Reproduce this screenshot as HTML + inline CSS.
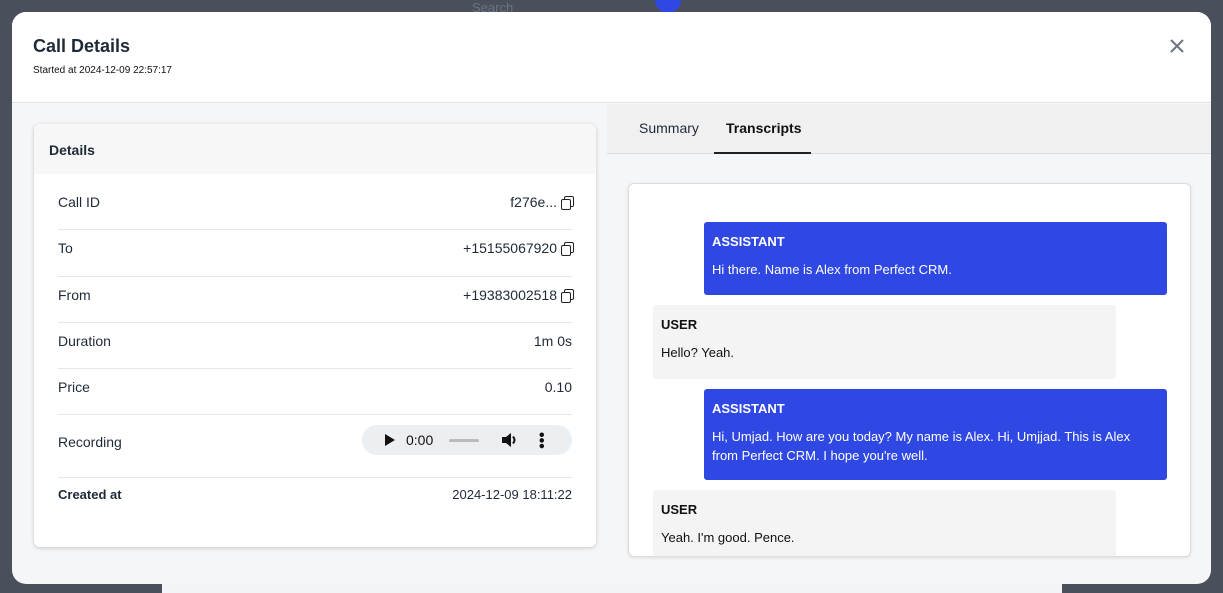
<!DOCTYPE html>
<html><head><style>
*{box-sizing:border-box;margin:0;padding:0}
body{width:1223px;height:589px;overflow:hidden;background:#4a4f5c;font-family:"Liberation Sans",sans-serif;position:relative;color:#1f2937}
.behind{position:absolute;left:162px;top:583px;width:900px;height:10px;background:#f3f4f6}
.search{position:absolute;left:472px;top:0;width:200px;height:14px;color:#6b7280;font-size:13px}
.modal{position:absolute;left:12px;top:12px;width:1199px;height:572px;background:#f5f6f8;border-radius:14px;overflow:hidden}
.head{height:91px;background:#fff;border-bottom:1px solid #e2e4e8;padding:24px 21px}
.head h1{font-size:18px;font-weight:bold;color:#1f2937}
.head p{font-size:10px;margin-top:8px;color:#111}
.close{position:absolute;right:26px;top:26px;width:16px;height:16px}
.card{position:absolute;left:22px;top:112px;width:562px;height:423px;background:#fff;border-radius:6px;box-shadow:0 1px 4px rgba(0,0,0,.2);overflow:hidden}
.card .t{height:50px;background:#f7f7f7;padding:18px 15px;font-weight:bold;font-size:14px}
.row{position:relative;margin:0 24px;border-bottom:1px solid #e5e7eb;font-size:14px;display:flex;justify-content:space-between;align-items:flex-start;line-height:16px;padding-top:10px}
.cp{display:inline-block;width:11px;height:12px;position:relative;margin-left:4px;vertical-align:-1px}
.cp:before{content:"";position:absolute;left:3px;top:0;width:8px;height:9px;border:1.5px solid #222;border-radius:2px}
.cp:after{content:"";position:absolute;left:0;top:3px;width:8px;height:9px;border:1.5px solid #222;border-radius:2px;background:#fff}
.audio{width:210px;height:30px;background:#eceff1;border-radius:15px;display:flex;align-items:center;padding-left:22px;font-size:14px;color:#111}
.tabs{position:absolute;left:595px;top:92px;width:604px;height:50px;background:#f0f0f0;border-bottom:1px solid #ddd;font-size:14px}
.tabs span{position:absolute;top:16px}
.tr{position:absolute;left:616px;top:171px;width:563px;height:374px;background:#fff;border:1px solid #ddd;border-radius:6px;box-shadow:0 1px 3px rgba(0,0,0,.1);overflow:hidden}
.b{position:absolute;width:463px;font-size:13px;padding:10px 8px;line-height:19px;border-radius:3px}
.b b{display:block;margin-bottom:9px}
.a{left:75px;background:#2f48e3;color:#fff}
.u{left:24px;background:#f4f4f4;color:#111}
</style></head><body>
<div class="search">Search</div>
<div style="position:absolute;left:655px;top:-13px;width:26px;height:26px;border-radius:50%;background:#2f48e3"></div>
<div class="behind"></div>
<div class="modal">
<div class="head"><h1>Call Details</h1><p>Started at 2024-12-09 22:57:17</p></div>
<svg class="close" viewBox="0 0 16 16"><path d="M2 2L14 14M14 2L2 14" stroke="#6b7280" stroke-width="2"/></svg>
<div class="card">
<div class="t">Details</div>
<div class="row" style="height:56px;align-items:center;padding:0"><span>Call ID</span><span>f276e...<i class="cp"></i></span></div>
<div class="row" style="height:47px"><span>To</span><span>+15155067920<i class="cp"></i></span></div>
<div class="row" style="height:46px"><span>From</span><span>+19383002518<i class="cp"></i></span></div>
<div class="row" style="height:46px"><span>Duration</span><span>1m 0s</span></div>
<div class="row" style="height:46px"><span>Price</span><span>0.10</span></div>
<div class="row" style="height:63px;align-items:center;padding:0 0 12px"><span style="margin-top:4px">Recording</span><div class="audio"><svg width="12" height="14" viewBox="0 0 12 14"><path d="M1 1L11 7L1 13Z" fill="#111"/></svg><span style="margin-left:10px">0:00</span><span style="margin-left:16px;width:30px;height:3px;background:#bbb;border-radius:2px;display:inline-block"></span><svg style="margin-left:22px" width="18" height="16" viewBox="0 0 18 16"><path d="M1 5H5L10 1V15L5 11H1Z" fill="#111"/><path d="M12 4.5Q15 8 12 11.5" stroke="#111" stroke-width="2" fill="none"/></svg><span style="margin-left:18px;font-weight:bold;font-size:16px;line-height:6px;writing-mode:vertical-lr">•••</span></div></div>
<div class="row" style="height:34px;border:none;font-size:13px;padding-top:9px"><span style="font-weight:bold">Created at</span><span>2024-12-09 18:11:22</span></div>
</div>
<div class="tabs"><span style="left:32px">Summary</span><span style="left:119px;font-weight:bold;color:#111">Transcripts</span><div style="position:absolute;left:107px;top:48px;width:97px;height:2px;background:#222"></div></div>
<div class="tr">
<div class="b a" style="top:38px;height:73px"><b>ASSISTANT</b>Hi there. Name is Alex from Perfect CRM.</div>
<div class="b u" style="top:121px;height:74px"><b>USER</b>Hello? Yeah.</div>
<div class="b a" style="top:205px;height:91px"><b>ASSISTANT</b>Hi, Umjad. How are you today? My name is Alex. Hi, Umjjad. This is Alex from Perfect CRM. I hope you're well.</div>
<div class="b u" style="top:306px;height:80px"><b>USER</b>Yeah. I'm good. Pence.</div>
</div>
</div>
</body></html>
